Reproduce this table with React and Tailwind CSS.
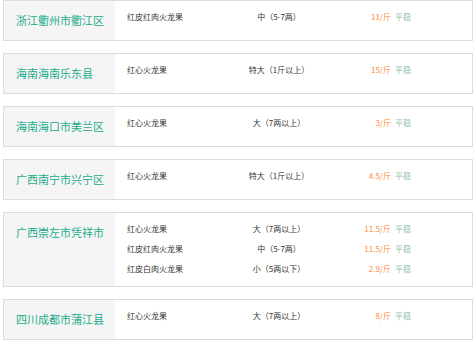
const markets = [
  {
    area: "浙江衢州市衢江区",
    rows: [{ name: "红皮红肉火龙果", spec: "中（5-7两）", price: "11/斤" }],
  },
  {
    area: "海南海南乐东县",
    rows: [{ name: "红心火龙果", spec: "特大（1斤以上）", price: "15/斤" }],
  },
  {
    area: "海南海口市美兰区",
    rows: [{ name: "红心火龙果", spec: "大（7两以上）", price: "3/斤" }],
  },
  {
    area: "广西南宁市兴宁区",
    rows: [{ name: "红心火龙果", spec: "特大（1斤以上）", price: "4.5/斤" }],
  },
  {
    area: "广西崇左市凭祥市",
    rows: [
      { name: "红心火龙果", spec: "大（7两以上）", price: "11.5/斤" },
      { name: "红皮红肉火龙果", spec: "中（5-7两）", price: "11.5/斤" },
      { name: "红皮白肉火龙果", spec: "小（5两以下）", price: "2.9/斤" },
    ],
  },
  {
    area: "四川成都市蒲江县",
    rows: [{ name: "红心火龙果", spec: "大（7两以上）", price: "8/斤" }],
  },
];

function MarketCard({ area, rows }) {
  return (
    <div className="flex min-h-[41px] border border-[#dcdcdc] bg-white">
      <div className="w-[111px] shrink-0 bg-[#f5f5f5] pl-[12px] pt-[11px] text-[11px] leading-[16px] text-[#1aac8c]">
        {area}
      </div>
      <div className="flex-1 pt-[6px] pb-[7px]">
        {rows.map((r, i) => (
          <div key={i} className="flex h-[20px] items-center text-[8px] text-[#333]">
            <div className="w-[122px] pl-[12px]">{r.name}</div>
            <div className="w-[84px] text-center">{r.spec}</div>
            <div className="w-[70px] text-right text-[#ff8a3d]">{r.price}</div>
            <div className="ml-[4px] text-[#93bfa9]">平稳</div>
          </div>
        ))}
      </div>
    </div>
  );
}

export default function App() {
  return (
    <div
      className="flex h-[340px] w-[474px] flex-col gap-[12px] overflow-hidden bg-white pl-[3px] pr-[1px]"
      style={{ fontFamily: '"Noto Sans CJK SC", "Noto Sans", sans-serif' }}
    >
      {markets.map((m) => (
        <MarketCard key={m.area} area={m.area} rows={m.rows} />
      ))}
    </div>
  );
}
